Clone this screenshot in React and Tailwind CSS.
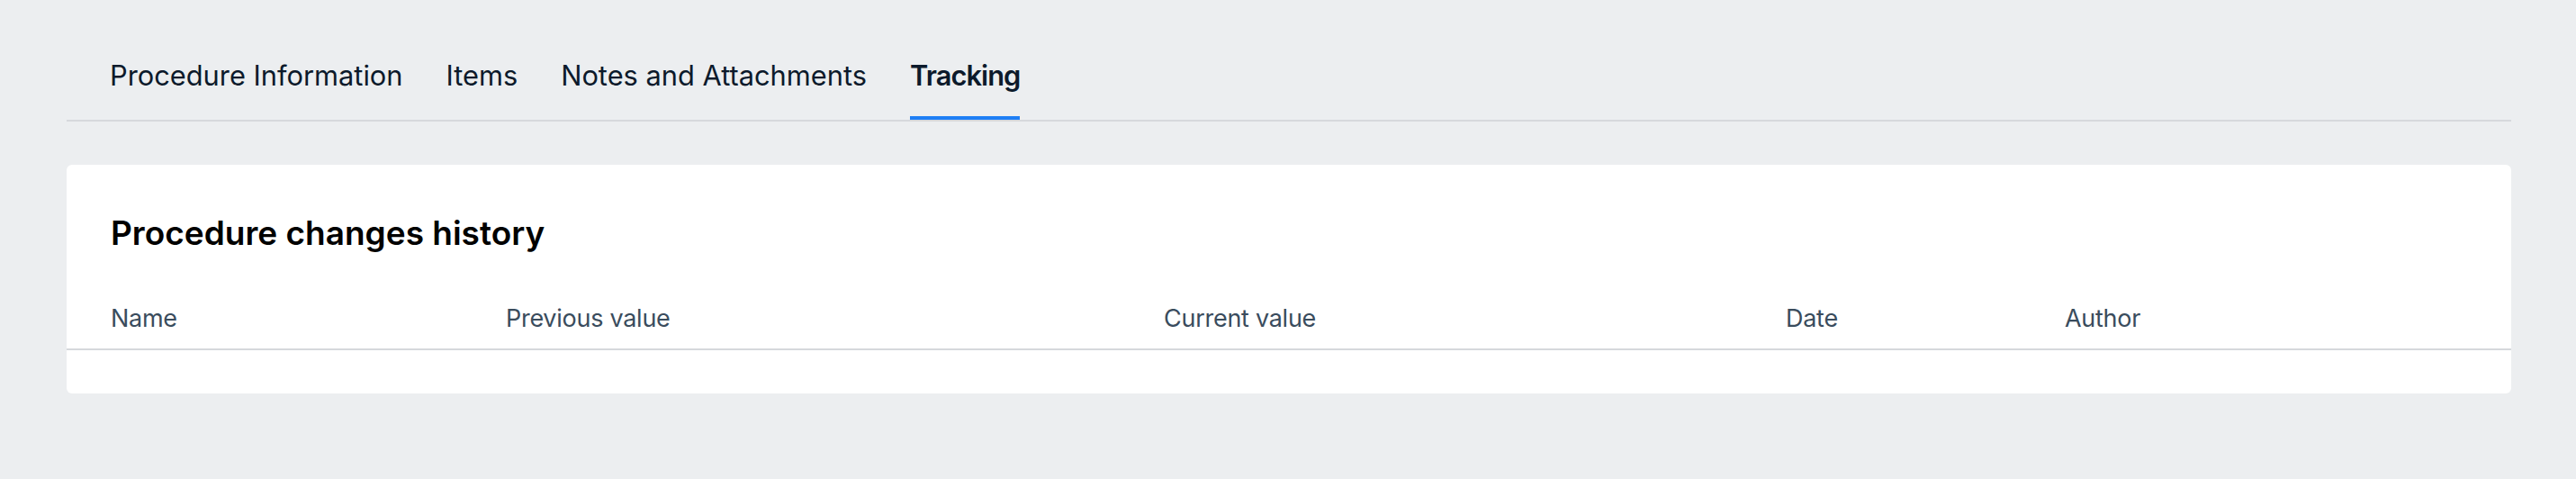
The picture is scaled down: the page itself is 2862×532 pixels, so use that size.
import React from 'react';

const tabs = ['Procedure Information', 'Items', 'Notes and Attachments', 'Tracking'];

const columns = [
  { label: 'Name', cls: 'pl-[49px]' },
  { label: 'Previous value', cls: '' },
  { label: 'Current value', cls: '' },
  { label: 'Date', cls: '' },
  { label: 'Author', cls: '' },
];

function Tabs({ active }) {
  return (
    <div className="flex border-b-2 border-[#d6d8dc] pl-[48px] gap-[48px]">
      {tabs.map((tab) => (
        <button
          key={tab}
          className={
            'pb-[27px] border-b-4 text-[30.8px] leading-[36px] text-[#0c1a2b] ' +
            (tab === active
              ? 'border-[#1f7ff5] font-semibold tracking-[-0.03em]'
              : 'border-transparent font-normal')
          }
        >
          {tab}
        </button>
      ))}
    </div>
  );
}

function HistoryTable() {
  return (
    <div className="bg-white rounded-md mt-[48px] pt-[54px] pb-[48px]">
      <h2 className="pl-[49px] text-[37px] leading-[44px] font-semibold text-black">
        Procedure changes history
      </h2>
      <div className="mt-[57px] grid grid-cols-[488px_731px_691px_310px_1fr] border-b-2 border-[#d6d8dc] pb-[17px]">
        {columns.map((col) => (
          <div key={col.label} className={'text-[27px] leading-[32px] tracking-[-0.01em] text-[#3a4c5d] ' + col.cls}>
            {col.label}
          </div>
        ))}
      </div>
    </div>
  );
}

export default function App() {
  return (
    <div className="min-h-[532px] bg-[#eceef0] pt-[66px] pl-[74px] pr-[72px] font-['Inter',sans-serif]">
      <Tabs active="Tracking" />
      <HistoryTable />
    </div>
  );
}
